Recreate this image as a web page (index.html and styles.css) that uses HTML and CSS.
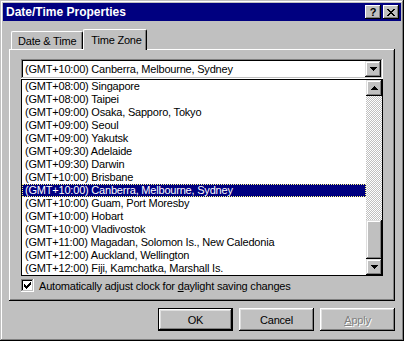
FILE: index.html
```html
<!DOCTYPE html>
<html lang="en">

<head>
    <meta charset="UTF-8">
    <title>Date/Time Properties</title>
    <link rel="stylesheet" href="styles.css">
</head>

<body>
    <div class="window">
        <div class="titlebar">
            <span class="title">Date/Time Properties</span>
            <div class="caption-buttons">
                <div class="cap-btn">?</div>
                <div class="cap-btn">
                    <svg width="8" height="7" shape-rendering="crispEdges">
                        <path d="M0 0h2v1h-2zM6 0h2v1h-2zM1 1h2v1h-2zM5 1h2v1h-2zM2 2h4v1h-4zM3 3h2v1h-2zM2 4h4v1h-4zM1 5h2v1h-2zM5 5h2v1h-2zM0 6h2v1h-2zM6 6h2v1h-2z" />
                    </svg>
                </div>
            </div>
        </div>

        <div class="tabs">
            <div class="tab">Date &amp; Time</div>
            <div class="tab active">Time Zone</div>
        </div>

        <div class="panel">
            <div class="combo">
                <div class="combo-text">(GMT+10:00) Canberra, Melbourne, Sydney</div>
                <div class="btn3d arrow-btn">
                    <svg width="7" height="4" shape-rendering="crispEdges"><path d="M0 0h7v1h-1v1h-1v1h-1v1h-1v-1h-1v-1h-1v-1h-1z" /></svg>
                </div>
            </div>

            <div class="dropdown">
                <ul class="items">
                    <li>(GMT+08:00) Singapore</li>
                    <li>(GMT+08:00) Taipei</li>
                    <li>(GMT+09:00) Osaka, Sapporo, Tokyo</li>
                    <li>(GMT+09:00) Seoul</li>
                    <li>(GMT+09:00) Yakutsk</li>
                    <li>(GMT+09:30) Adelaide</li>
                    <li>(GMT+09:30) Darwin</li>
                    <li>(GMT+10:00) Brisbane</li>
                    <li class="selected">(GMT+10:00) Canberra, Melbourne, Sydney</li>
                    <li>(GMT+10:00) Guam, Port Moresby</li>
                    <li>(GMT+10:00) Hobart</li>
                    <li>(GMT+10:00) Vladivostok</li>
                    <li>(GMT+11:00) Magadan, Solomon Is., New Caledonia</li>
                    <li>(GMT+12:00) Auckland, Wellington</li>
                    <li>(GMT+12:00) Fiji, Kamchatka, Marshall Is.</li>
                </ul>
                <div class="scrollbar">
                    <div class="btn3d sb-btn">
                        <svg width="7" height="4" shape-rendering="crispEdges"><path d="M3 0h1v1h1v1h1v1h1v1h-7v-1h1v-1h1v-1h1z" /></svg>
                    </div>
                    <div class="track"></div>
                    <div class="btn3d thumb"></div>
                    <div class="btn3d sb-btn">
                        <svg width="7" height="4" shape-rendering="crispEdges"><path d="M0 0h7v1h-1v1h-1v1h-1v1h-1v-1h-1v-1h-1v-1h-1z" /></svg>
                    </div>
                </div>
            </div>

            <div class="check">
                <span class="box">
                    <svg width="7" height="7" shape-rendering="crispEdges">
                        <path d="M6 0h1v1h-1zM5 1h2v1h-2zM0 2h1v1h-1zM4 2h3v1h-3zM0 3h2v1h-2zM3 3h3v1h-3zM0 4h5v1h-5zM1 5h3v1h-3zM2 6h1v1h-1z" />
                    </svg>
                </span>
                <span>Automatically adjust clock for <u>d</u>aylight saving changes</span>
            </div>
        </div>

        <div class="buttons">
            <div class="btn default"><span class="btn-inner">OK</span></div>
            <div class="btn"><span class="btn-inner">Cancel</span></div>
            <div class="btn disabled"><span class="btn-inner"><u>A</u>pply</span></div>
        </div>
    </div>
</body>

</html>
```

FILE: styles.css
```css
* {
    box-sizing: border-box;
}

body {
    margin: 0;
    background-color: #c0c0c0;
    font-family: "Liberation Sans", Arial, sans-serif;
    font-size: 11px;
    letter-spacing: -0.2px;
    color: #000;
}

.window {
    width: 404px;
    height: 341px;
    padding: 3px;
    display: flex;
    flex-direction: column;
    background-color: #c0c0c0;
    box-shadow: inset -1px -1px #000, inset 1px 1px #c0c0c0,
        inset -2px -2px #808080, inset 2px 2px #fff;
}

/* barra de titulo */
.titlebar {
    height: 18px;
    display: flex;
    justify-content: space-between;
    align-items: center;
    padding: 0 2px 0 3px;
    background-color: #000080;
}

.title {
    color: #fff;
    font-weight: bold;
    font-size: 12px;
    letter-spacing: 0;
}

.caption-buttons {
    display: flex;
    gap: 2px;
}

.cap-btn {
    width: 16px;
    height: 14px;
    display: flex;
    justify-content: center;
    align-items: center;
    font-weight: bold;
    font-size: 11px;
    line-height: 1;
    background-color: #c0c0c0;
    box-shadow: inset -1px -1px #000, inset 1px 1px #fff, inset -2px -2px #808080;
}

/* pestañas */
.tabs {
    display: flex;
    align-items: flex-end;
    height: 21px;
    margin: 8px 6px -1px;
    padding-left: 2px;
    position: relative;
    z-index: 1;
}

.tab {
    height: 18px;
    margin-bottom: 1px;
    padding: 0 6px 0 6px;
    display: flex;
    align-items: center;
    border-top: 1px solid #fff;
    border-left: 1px solid #fff;
    border-right: 1px solid #000;
    border-radius: 2px 2px 0 0;
    box-shadow: inset -1px 0 #808080;
    background-color: #c0c0c0;
}

.tab.active {
    height: 21px;
    margin-bottom: 0;
    padding: 0 4px 1px 7px;
}

.panel {
    height: 252px;
    margin: 0 6px;
    padding: 10px 12px 0;
    box-shadow: inset -1px -1px #000, inset 1px 1px #fff, inset -2px -2px #808080;
}

/* combo */
.combo {
    height: 20px;
    display: flex;
    align-items: center;
    padding: 2px;
    background-color: #fff;
    box-shadow: inset -1px -1px #fff, inset 1px 1px #808080,
        inset -2px -2px #c0c0c0, inset 2px 2px #000;
}

.combo-text {
    flex: 1;
    padding-left: 2px;
}

.btn3d {
    display: flex;
    justify-content: center;
    align-items: center;
    background-color: #c0c0c0;
    box-shadow: inset -1px -1px #000, inset 1px 1px #dfdfdf,
        inset -2px -2px #808080, inset 2px 2px #fff;
}

.arrow-btn {
    width: 16px;
    height: 16px;
}

/* lista desplegada */
.dropdown {
    height: 197px;
    display: flex;
    border: 1px solid #000;
    background-color: #fff;
}

.items {
    flex: 1;
    margin: 0;
    padding: 0;
    list-style: none;
}

.items li {
    height: 13px;
    line-height: 13px;
    padding-left: 3px;
    white-space: nowrap;
    overflow: hidden;
}

.items li.selected {
    padding-left: 2px;
    line-height: 11px;
    color: #fff;
    background-color: #000080;
    border: 1px dotted #ffff80;
}

.scrollbar {
    width: 16px;
    display: flex;
    flex-direction: column;
}

.sb-btn {
    height: 16px;
}

.track {
    flex: 1;
    background-image: repeating-conic-gradient(#c0c0c0 0 25%, #fff 0 50%);
    background-size: 2px 2px;
}

.thumb {
    height: 39px;
}

/* checkbox */
.check {
    display: flex;
    align-items: center;
    gap: 5px;
    margin-top: 3px;
}

.box {
    width: 13px;
    height: 13px;
    display: flex;
    justify-content: center;
    align-items: center;
    background-color: #fff;
    box-shadow: inset -1px -1px #fff, inset 1px 1px #808080,
        inset -2px -2px #c0c0c0, inset 2px 2px #000;
}

/* botones */
.buttons {
    display: flex;
    justify-content: flex-end;
    gap: 6px;
    margin: 7px 6px 0;
}

.btn {
    width: 75px;
    height: 23px;
    display: flex;
    background-color: #c0c0c0;
    box-shadow: inset -1px -1px #000, inset 1px 1px #fff,
        inset -2px -2px #808080, inset 2px 2px #dfdfdf;
}

.btn-inner {
    flex: 1;
    display: flex;
    justify-content: center;
    align-items: center;
}

.btn.default {
    border: 1px solid #000;
}

.btn.disabled {
    color: #808080;
    text-shadow: 1px 1px #fff;
}
```
